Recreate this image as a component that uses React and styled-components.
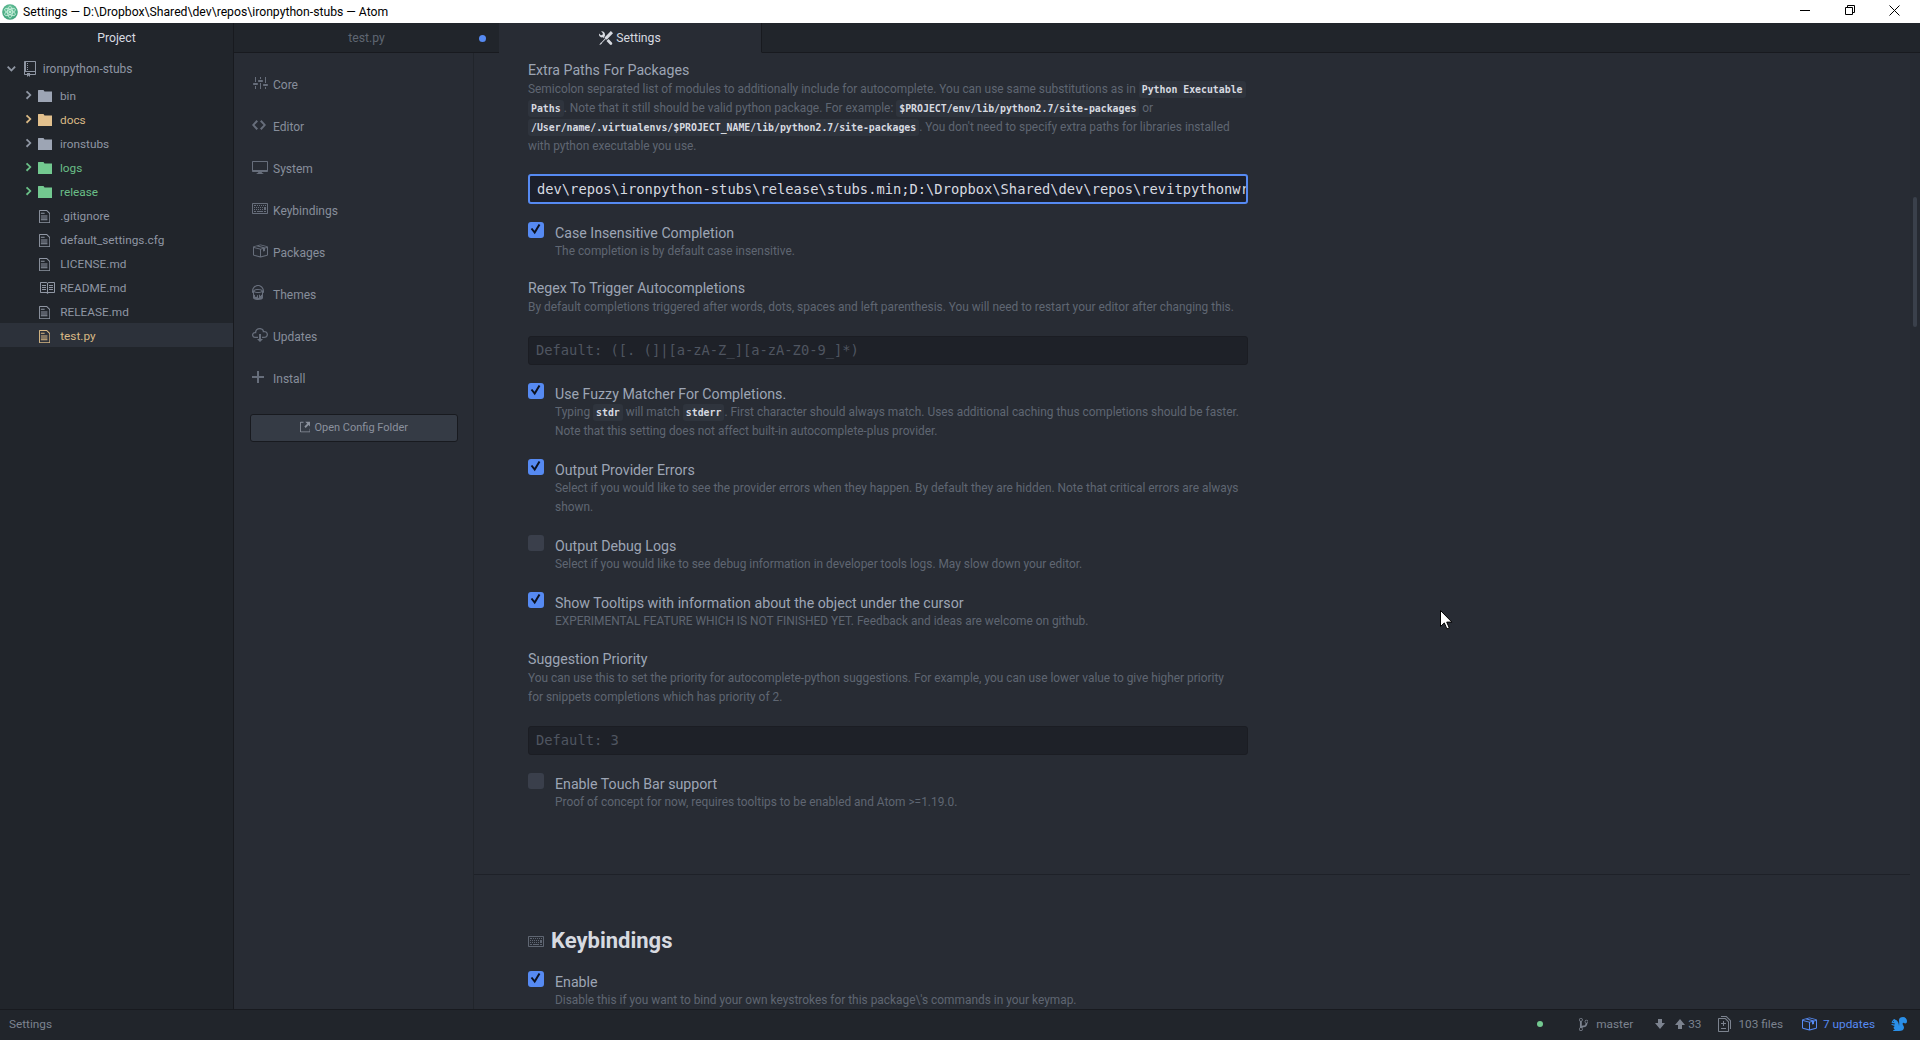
import React from 'react';
import styled, { createGlobalStyle } from 'styled-components';

const UI_FONT = `Roboto, 'Noto Sans', sans-serif`;
const MONO_FONT = `'DejaVu Sans Mono', 'Liberation Mono', monospace`;

const GlobalStyle = createGlobalStyle`
  html, body {
    margin: 0;
    height: 100%;
    overflow: hidden;
    background: #21252b;
  }
  #root {
    height: 100%;
  }
  * {
    box-sizing: border-box;
  }
`;

// octicon shapes, keyed by name: [viewBox width, path]
const ICONS = {
  repo: [12, 'M4 9H3V8h1v1zm0-3H3v1h1V6zm0-2H3v1h1V4zm0-2H3v1h1V2zm8-1v12c0 .55-.45 1-1 1H6v2l-1.5-1.5L3 16v-2H1c-.55 0-1-.45-1-1V1c0-.55.45-1 1-1h10c.55 0 1 .45 1 1zm-1 10H1v2h2v-1h3v1h5v-2zm0-10H2v9h9V1z'],
  file: [12, 'M6 5H2V4h4v1zM2 8h7V7H2v1zm0 2h7V9H2v1zm0 2h7v-1H2v1zm10-7.5V14c0 .55-.45 1-1 1H1c-.55 0-1-.45-1-1V2c0-.55.45-1 1-1h7.5L12 4.5zM11 5L8 2H1v12h10V5z'],
  book: [16, 'M3 5h4v1H3V5zm0 3h4V7H3v1zm0 2h4V9H3v1zm11-5h-4v1h4V5zm0 2h-4v1h4V7zm0 2h-4v1h4V9zm2-6v9c0 .55-.45 1-1 1H9.5l-1 1-1-1H2c-.55 0-1-.45-1-1V3c0-.55.45-1 1-1h5.5l1 1 1-1H15c.55 0 1 .45 1 1zm-8 .5L7.5 3H2v9h6V3.5zm7-.5H9.5l-.5.5V12h6V3z'],
  folder: [14, 'M0 2.5c0-.3.2-.5.5-.5h5L6.5 3.5H14V14H0z'],
  chevronRight: [8, 'M7.5 8l-5 5L1 11.5 4.75 8 1 4.5 2.5 3l5 5z'],
  chevronDown: [10, 'M5 11L0 6l1.5-1.5L5 8.25 8.5 4.5 10 6l-5 5z'],
  settings: [16, 'M4 7H3V2h1v5zm-1 7h1v-3H3v3zm5 0h1V8H8v6zm5 0h1v-2h-1v2zm1-12h-1v6h1V2zM9 2H8v2h1V2zM5 8H2c-.55 0-1 .45-1 1s.45 1 1 1h3c.55 0 1-.45 1-1s-.45-1-1-1zm5-3H7c-.55 0-1 .45-1 1s.45 1 1 1h3c.55 0 1-.45 1-1s-.45-1-1-1zm5 4h-3c-.55 0-1 .45-1 1s.45 1 1 1h3c.55 0 1-.45 1-1s-.45-1-1-1z'],
  code: [14, 'M9.5 3L8 4.5 11.5 8 8 11.5 9.5 13 14 8 9.5 3zm-5 0L0 8l4.5 5L6 11.5 2.5 8 6 4.5 4.5 3z'],
  desktop: [16, 'M15 2H1c-.55 0-1 .45-1 1v9c0 .55.45 1 1 1h5.34c-.25.61-.86 1.39-2.34 2h8c-1.48-.61-2.09-1.39-2.34-2H15c.55 0 1-.45 1-1V3c0-.55-.45-1-1-1zm0 9H1V3h14v8z'],
  keyboard: [16, 'M10 5H9V4h1v1zM3 6H2v1h1V6zm5-2H7v1h1V4zM4 4H2v1h2V4zm8 7h2v-1h-2v1zM8 7h1V6H8v1zm-4 3H2v1h2v-1zm8-6h-1v1h1V4zm2 0h-1v1h1V4zm-2 5h2V6h-2v3zm4-6v9c0 .55-.45 1-1 1H1c-.55 0-1-.45-1-1V3c0-.55.45-1 1-1h14c.55 0 1 .45 1 1zm-1 0H1v9h14V3zM6 7h1V6H6v1zm0-3H5v1h1V4zM4 7h1V6H4v1zm1 4h6v-1H5v1zm5-4h1V6h-1v1zM3 8H2v1h1V8zm5 0v1h1V8H8zM6 8v1h1V8H6zM5 8H4v1h1V8zm5 1h1V8h-1v1z'],
  package: [16, 'M1 4.27v7.47c0 .45.3.84.75.97l6.5 1.73c.16.05.34.05.5 0l6.5-1.73c.45-.13.75-.52.75-.97V4.27c0-.45-.3-.84-.75-.97l-6.5-1.74a1.4 1.4 0 0 0-.5 0L1.75 3.3c-.45.13-.75.52-.75.97zm7 9.09l-6-1.59V5l6 1.61v6.75zM2 4l2.5-.67L11 5.06l-2.5.67L2 4zm13 7.77l-6 1.59V6.61l2-.55V8.5l2-.53V5.53L15 5v6.77zm-2-7.24L6.5 2.8l2-.53L15 4l-2 .53z'],
  paintcan: [12, 'M6 0C2.69 0 0 2.69 0 6v1c0 .55.45 1 1 1v5c0 1.1 2.24 2 5 2s5-.9 5-2V8c.55 0 1-.45 1-1V6c0-3.31-2.69-6-6-6zm3 10v.5c0 .28-.22.5-.5.5s-.5-.22-.5-.5V10c0-.28-.22-.5-.5-.5s-.5.22-.5.5v2.5c0 .28-.22.5-.5.5s-.5-.22-.5-.5v-2c0-.28-.22-.5-.5-.5s-.5.22-.5.5v.5c0 .55-.45 1-1 1s-1-.45-1-1v-1c-.55 0-1-.45-1-1V7.2c.91.49 2.36.8 4 .8 1.64 0 3.09-.31 4-.8V9c0 .55-.45 1-1 1zM6 7c-1.68 0-3.12-.41-3.71-1C2.88 5.41 4.32 5 6 5c1.68 0 3.12.41 3.71 1-.59.59-2.03 1-3.71 1zm0-3c-2.76 0-4.69.83-4.97 2.09C1.29 3.34 3.41 1.02 6 1c2.59.02 4.71 2.34 4.97 5.09C10.69 4.83 8.76 4 6 4z'],
  cloud: [16, 'M9 12h2l-3 3-3-3h2V7h2v5zm3-8c0-.44-.91-3-4.5-3C5.08 1 3 2.92 3 5 1.02 5 0 6.52 0 8c0 1.53 1 3 3 3h3V9.7H3C1.38 9.7 1.3 8.28 1.3 8c0-.17.05-1.7 1.7-1.7h1.3V5c0-1.39 1.56-2.7 3.2-2.7 2.55 0 3.13 1.55 3.2 1.8v1.2H12c.81 0 2.7.22 2.7 2.2 0 2.09-2.25 2.2-2.7 2.2h-2V11h2c2.08 0 4-1.16 4-3.5C16 5.06 14.08 4 12 4z'],
  plus: [12, 'M12 9H7v5H5V9H0V7h5V2h2v5h5v2z'],
  linkExternal: [12, 'M11 10h1v3c0 .55-.45 1-1 1H1c-.55 0-1-.45-1-1V3c0-.55.45-1 1-1h3v1H1v10h10v-3zM6 2l2.25 2.25L5 7.5 6.5 9l3.25-3.25L12 8V2H6z'],
  branch: [10, 'M10 5c0-1.11-.89-2-2-2a1.993 1.993 0 0 0-1 3.72v.3c-.02.52-.23.98-.63 1.38-.4.4-.86.61-1.38.63-.83.02-1.48.16-2 .45V4.72a1.993 1.993 0 0 0-1-3.72C.88 1 0 1.89 0 3a2 2 0 0 0 1 1.72v6.56c-.59.35-1 .99-1 1.72 0 1.11.89 2 2 2 1.11 0 2-.89 2-2 0-.53-.2-1-.53-1.36.09-.06.48-.41.59-.47.25-.11.56-.17.94-.17 1.05-.05 1.95-.45 2.75-1.25S8.95 7.77 9 6.73h-.02C9.59 6.37 10 5.73 10 5zM2 1.8c.66 0 1.2.55 1.2 1.2 0 .65-.55 1.2-1.2 1.2C1.35 4.2.8 3.65.8 3c0-.65.55-1.2 1.2-1.2zm0 12.41c-.66 0-1.2-.55-1.2-1.2 0-.65.55-1.2 1.2-1.2.65 0 1.2.55 1.2 1.2 0 .65-.55 1.2-1.2 1.2zm6-8c-.66 0-1.2-.55-1.2-1.2 0-.65.55-1.2 1.2-1.2.65 0 1.2.55 1.2 1.2 0 .65-.55 1.2-1.2 1.2z'],
  arrowDown: [10, 'M7 7V3H3v4H0l5 6 5-6H7z'],
  arrowUp: [10, 'M5 3L0 9h3v4h4V9h3L5 3z'],
  diff: [13, 'M6 7h2v1H6v2H5V8H3V7h2V5h1v2zm-3 6h5v-1H3v1zM7.5 2L11 5.5V15c0 .55-.45 1-1 1H1c-.55 0-1-.45-1-1V3c0-.55.45-1 1-1h6.5zM10 6L7 3H1v12h9V6zM8.5 0H3v1h5l4 4v8h1V4.5L8.5 0z'],
  tools: [16, 'M4.48 7.27c.26.26 1.28 1.33 1.28 1.33l.56-.58-.88-.91 1.69-1.8s-.76-.74-.43-.45c.32-1.19.03-2.51-.87-3.44C4.93.5 3.66.2 2.52.51l1.93 2-.51 1.96-1.89.52-1.93-2C-.19 4.17.1 5.48 1 6.4c.94.98 2.29 1.26 3.48.87zm6.44 1.94l-2.33 2.3 3.84 3.98c.31.33.73.49 1.14.49.41 0 .82-.16 1.14-.49.63-.65.63-1.7 0-2.35l-3.79-3.93zM16 2.53L13.55 0 6.33 7.46l.88.91-4.31 4.46-.99.53-1.39 2.27.35.37 2.2-1.44.51-1.02L7.9 9.08l.88.91L16 2.53z'],
  squirrel: [16, 'M12 1C9.79 1 8 2.31 8 3.92c0 1.94.5 3.03 0 6.08 0-4.5-2.77-6.34-4-6.34.05-.5-.48-.66-.48-.66s-.22.11-.3.34c-.27-.31-.56-.27-.56-.27l-.13.58S.7 4.29.68 6.87c.2.33 1.53.6 2.47.43.89.05.67.79.47.99C2.78 9.13 2 8 1 8S0 9 1 9s1 1 3 1c-3.09 1.2 0 4 0 4H3c-1 0-1 1-1 1h6c3 0 5-1 5-3.47 0-.85-.43-1.79-1-2.53-1.11-1.46.23-2.68 1-2 .77.68 3 1 3-2 0-2.21-1.79-4-4-4zM2.5 6c-.28 0-.5-.22-.5-.5s.22-.5.5-.5.5.22.5.5-.22.5-.5.5z'],
};

const IconSvg = styled.svg`
  display: block;
  flex: none;
  fill: currentColor;
`;

const Icon = ({ name, height = 16, className }) => {
  const [w, d] = ICONS[name];
  return (
    <IconSvg className={className} viewBox={`0 0 ${w} 16`} width={(w * height) / 16} height={height}>
      <path d={d} />
    </IconSvg>
  );
};

const App = styled.div`
  height: 100vh;
  display: flex;
  flex-direction: column;
  overflow: hidden;
  font-family: ${UI_FONT};
  color: #9da5b4;
`;

/* title bar */
const TitleBar = styled.header`
  height: 23px;
  flex: none;
  display: flex;
  align-items: center;
  padding: 0 3px 0 2px;
  background: #fff;
  color: #000;
  font-size: 12.2px;
`;
const TitleText = styled.span`
  margin-left: 5px;
  flex: 1;
`;
const WinButton = styled.div`
  width: 45px;
  height: 20px;
  align-self: flex-start;
  display: flex;
  align-items: center;
  justify-content: center;
  svg {
    display: block;
    fill: none;
    stroke: #000;
    stroke-width: 1;
  }
`;

const AtomLogo = () => (
  <svg width="16" height="16" viewBox="0 0 16 16" style={{ flex: 'none' }}>
    <defs>
      <radialGradient id="atomBg" cx="50%" cy="40%" r="60%">
        <stop offset="0%" stopColor="#7fd6ad" />
        <stop offset="100%" stopColor="#3c9f78" />
      </radialGradient>
    </defs>
    <circle cx="8" cy="8" r="7.8" fill="url(#atomBg)" />
    <g fill="none" stroke="#d8f3e5" strokeWidth="0.7">
      <ellipse cx="8" cy="8" rx="6" ry="2.4" transform="rotate(30 8 8)" />
      <ellipse cx="8" cy="8" rx="6" ry="2.4" transform="rotate(-30 8 8)" />
      <ellipse cx="8" cy="8" rx="6" ry="2.4" transform="rotate(90 8 8)" />
    </g>
    <circle cx="8" cy="8" r="1.1" fill="#d8f3e5" />
  </svg>
);

/* workspace */
const Workspace = styled.div`
  flex: 1;
  min-height: 0;
  display: flex;
`;

/* tree view */
const TreePanel = styled.aside`
  width: 234px;
  flex: none;
  background: #21252b;
  border-right: 1px solid #181a1f;
`;
const ProjectTab = styled.div`
  height: 29px;
  padding-top: 1px;
  display: flex;
  align-items: center;
  justify-content: center;
  color: #d7dae0;
  font-size: 12.2px;
`;
const Tree = styled.div`
  padding-top: 5px;
  font-size: 11.8px;
`;
const TreeRoot = styled.div`
  height: 24px;
  margin-bottom: 2px;
  display: flex;
  align-items: center;
  padding-left: 7px;
  color: #8f96a3;
  gap: 7px;
  font-size: 12px;
  > :first-child {
    margin-right: 1px;
  }
`;
const TreeRow = styled.div`
  height: 24px;
  display: flex;
  align-items: center;
  padding-top: 2px;
  padding-left: ${p => (p.$folder ? 25 : 39)}px;
  color: ${p => p.$color || '#8f96a3'};
  background: ${p => (p.$selected ? '#2c313a' : 'transparent')};
`;
const Chevron = styled(Icon)`
  margin-right: 6px;
  margin-top: -2px;
`;
const TreeIcon = styled(Icon)`
  margin-right: ${p => p.$gap}px;
`;
const FolderIcon = styled(Icon)`
  margin-right: 8px;
  color: ${p => p.$color};
`;

/* editor side */
const Main = styled.div`
  flex: 1;
  min-width: 0;
  display: flex;
  flex-direction: column;
`;
const TabBar = styled.div`
  height: 30px;
  flex: none;
  display: flex;
  background: #21252b;
`;
const Tab = styled.div`
  position: relative;
  width: ${p => p.$width}px;
  padding-top: 1px;
  display: flex;
  align-items: center;
  justify-content: center;
  gap: 3px;
  font-size: 12.2px;
  color: ${p => (p.$active ? '#d7dae0' : '#5f6672')};
  background: ${p => (p.$active ? '#282c34' : '#21252b')};
  border-bottom: 1px solid ${p => (p.$active ? '#282c34' : '#181a1f')};
  border-right: ${p => (p.$active ? '1px solid #181a1f' : '0')};
`;
const ModifiedDot = styled.span`
  position: absolute;
  top: 12px;
  right: 13px;
  width: 7px;
  height: 7px;
  border-radius: 50%;
  background: #568af2;
`;
const TabFill = styled.div`
  flex: 1;
  border-bottom: 1px solid #181a1f;
`;
const SettingsPane = styled.div`
  flex: 1;
  min-height: 0;
  display: flex;
  background: #282c34;
`;

/* settings menu */
const Menu = styled.nav`
  width: 240px;
  flex: none;
  border-right: 1px solid #21252b;
  padding: 11px 16px 0;
`;
const MenuItem = styled.div`
  height: 42px;
  display: flex;
  align-items: center;
  font-size: 12px;
  color: #878e9b;
`;
const MenuIconBox = styled.div`
  width: 23px;
  flex: none;
  padding-left: 2px;
  margin-top: -4px;
  color: #676e7b;
`;
const ConfigButton = styled.button`
  width: 208px;
  height: 28px;
  margin-top: 14px;
  display: flex;
  align-items: center;
  justify-content: center;
  gap: 4px;
  padding: 0 0 2px;
  font: inherit;
  font-size: 11px;
  color: #8b919d;
  background: #353b45;
  border: 1px solid #181a1f;
  border-radius: 3px;
`;

/* settings list */
const Content = styled.div`
  flex: 1;
  min-width: 0;
  overflow: hidden;
  padding: 8px 0 0 54px;
`;
const Column = styled.div`
  width: 720px;
`;
const Title = styled.div`
  font-size: 14.2px;
  line-height: 19px;
  color: #9da5b4;
`;
const Description = styled.div`
  font-size: 11.9px;
  line-height: 19px;
  color: #5f6672;
`;
const Chip = styled.code`
  font-family: ${MONO_FONT};
  font-weight: 700;
  font-size: 9.85px;
  line-height: 17px;
  display: inline-block;
  padding: 0 3px;
  color: #d7dae0;
  background: #2f343d;
  border-radius: 3px;
`;
const Setting = styled.div`
  margin-top: ${p => p.$top || 18}px;
`;
const TextInput = styled.div`
  height: ${p => (p.$focused ? 30 : 29)}px;
  margin-top: ${p => (p.$focused ? 18 : 19)}px;
  padding: ${p => (p.$focused ? '0 7px' : '0 7px 2px')};
  display: flex;
  align-items: center;
  overflow: hidden;
  white-space: nowrap;
  font-family: ${MONO_FONT};
  font-size: 13.75px;
  border-radius: 3px;
  color: ${p => (p.$focused ? '#d7dae0' : '#4f5560')};
  background: ${p => (p.$focused ? '#1b1f2b' : '#1e2128')};
  border: ${p => (p.$focused ? '2px solid #568af2' : '1px solid #1b1d23')};
`;
const CheckRow = styled.div`
  display: flex;
  gap: 11px;
  margin-top: 18px;
`;
const CheckBox = styled.div`
  width: 16px;
  height: 16px;
  flex: none;
  border-radius: 3px;
  background: ${p => (p.$checked ? '#568af2' : '#3a3f4b')};
  svg {
    display: block;
    fill: none;
    stroke: #0c1220;
    stroke-width: 2;
  }
`;
const CheckBody = styled.div`
  padding-top: 2px;
  flex: 1;
  min-width: 0;
  ${Title} {
    line-height: 18px;
  }
`;
const Rule = styled.hr`
  margin: 62px 0 0 -54px;
  width: calc(100vw - 474px);
  height: 0;
  border: 0;
  border-top: 1px solid #1e2128;
`;
const SectionHeading = styled.h2`
  display: flex;
  align-items: center;
  gap: 7px;
  margin: 54px 0 0;
  font-size: 22px;
  line-height: 24px;
  font-weight: 700;
  color: #d7dae0;
  svg {
    color: #5f6672;
    margin-top: 2px;
  }
`;
const Scrollbar = styled.div`
  width: 10px;
  flex: none;
  padding-top: 144px;
  padding-left: 3px;
  background: #262a32;
`;
const ScrollThumb = styled.div`
  width: 4px;
  height: 130px;
  border-radius: 2px;
  background: #3a404b;
`;

/* status bar */
const StatusBar = styled.footer`
  height: 31px;
  flex: none;
  display: flex;
  align-items: center;
  padding: 0 13px 2px 9px;
  background: #21252b;
  border-top: 1px solid #181a1f;
  font-size: 11.8px;
  color: #7c838f;
`;
const StatusLeft = styled.div`
  flex: 1;
`;
const StatusItem = styled.div`
  display: flex;
  align-items: center;
  gap: ${p => p.$gap || 0}px;
  margin-left: ${p => p.$left || 0}px;
  color: ${p => p.$color || 'inherit'};
`;
const GreenDot = styled.span`
  width: 6px;
  height: 6px;
  border-radius: 50%;
  background: #73c990;
`;
const Cursor = styled.svg`
  position: absolute;
  left: 1440px;
  top: 610px;
  pointer-events: none;
`;

const treeFolders = [
  { name: 'bin', icon: '#9da5b4', text: '#8f96a3' },
  { name: 'docs', icon: '#e2c08d', text: '#d9b985' },
  { name: 'ironstubs', icon: '#9da5b4', text: '#8f96a3' },
  { name: 'logs', icon: '#73c990', text: '#6abf87' },
  { name: 'release', icon: '#73c990', text: '#6abf87' },
];
const treeFiles = [
  { name: '.gitignore', icon: 'file' },
  { name: 'default_settings.cfg', icon: 'file' },
  { name: 'LICENSE.md', icon: 'file' },
  { name: 'README.md', icon: 'book' },
  { name: 'RELEASE.md', icon: 'file' },
  { name: 'test.py', icon: 'file', color: '#d9b985', selected: true },
];
const menuItems = [
  { name: 'Core', icon: 'settings' },
  { name: 'Editor', icon: 'code' },
  { name: 'System', icon: 'desktop' },
  { name: 'Keybindings', icon: 'keyboard' },
  { name: 'Packages', icon: 'package' },
  { name: 'Themes', icon: 'paintcan' },
  { name: 'Updates', icon: 'cloud' },
  { name: 'Install', icon: 'plus' },
];

const Check = ({ checked, title, children }) => (
  <CheckRow>
    <CheckBox $checked={checked}>
      {checked && (
        <svg width="16" height="16" viewBox="0 0 16 16">
          <path d="M3.5 6.5 L6.7 10.5 L11.5 2.5" />
        </svg>
      )}
    </CheckBox>
    <CheckBody>
      <Title>{title}</Title>
      <Description>{children}</Description>
    </CheckBody>
  </CheckRow>
);

export default function AtomSettings() {
  return (
    <App>
      <GlobalStyle />
      <TitleBar>
        <AtomLogo />
        <TitleText>Settings — D:\Dropbox\Shared\dev\repos\ironpython-stubs — Atom</TitleText>
        <WinButton>
          <svg width="10" height="10" viewBox="0 0 10 10"><path d="M0 5.5H10" /></svg>
        </WinButton>
        <WinButton>
          <svg width="10" height="10" viewBox="0 0 10 10"><path d="M.5 2.5h7v7h-7zM2.5 2.5v-2h7v7h-2" /></svg>
        </WinButton>
        <WinButton>
          <svg width="11" height="11" viewBox="0 0 11 11"><path d="M.5.5l10 10M10.5.5l-10 10" /></svg>
        </WinButton>
      </TitleBar>

      <Workspace>
        <TreePanel>
          <ProjectTab>Project</ProjectTab>
          <Tree>
            <TreeRoot>
              <Icon name="chevronDown" height={14} />
              <Icon name="repo" height={16} />
              <span>ironpython-stubs</span>
            </TreeRoot>
            {treeFolders.map(f => (
              <TreeRow key={f.name} $folder $color={f.text}>
                <Chevron name="chevronRight" height={14} />
                <FolderIcon name="folder" height={16} $color={f.icon} />
                <span>{f.name}</span>
              </TreeRow>
            ))}
            {treeFiles.map(f => (
              <TreeRow key={f.name} $color={f.color} $selected={f.selected}>
                <TreeIcon name={f.icon} height={f.icon === 'book' ? 16 : 15} $gap={f.icon === 'book' ? 5 : 10} />
                <span>{f.name}</span>
              </TreeRow>
            ))}
          </Tree>
        </TreePanel>

        <Main>
          <TabBar>
            <Tab $width={265}>
              test.py
              <ModifiedDot />
            </Tab>
            <Tab $width={263} $active>
              <Icon name="tools" height={14} />
              Settings
            </Tab>
            <TabFill />
          </TabBar>

          <SettingsPane>
            <Menu>
              {menuItems.map(item => (
                <MenuItem key={item.name}>
                  <MenuIconBox>
                    <Icon name={item.icon} height={16} />
                  </MenuIconBox>
                  {item.name}
                </MenuItem>
              ))}
              <ConfigButton>
                <Icon name="linkExternal" height={14} />
                Open Config Folder
              </ConfigButton>
            </Menu>

            <Content>
              <Column>
                <Title>Extra Paths For Packages</Title>
                <Description>
                  Semicolon separated list of modules to additionally include for autocomplete. You can use same substitutions as in <Chip>Python Executable</Chip> <Chip>Paths</Chip>. Note that it still should be valid python package. For example: <Chip>$PROJECT/env/lib/python2.7/site-packages</Chip> or <Chip>/User/name/.virtualenvs/$PROJECT_NAME/lib/python2.7/site-packages</Chip>. You don't need to specify extra paths for libraries installed with python executable you use.
                </Description>
                <TextInput $focused>dev\repos\ironpython-stubs\release\stubs.min;D:\Dropbox\Shared\dev\repos\revitpythonwr</TextInput>

                <Check checked title="Case Insensitive Completion">The completion is by default case insensitive.</Check>

                <Setting>
                  <Title>Regex To Trigger Autocompletions</Title>
                  <Description>By default completions triggered after words, dots, spaces and left parenthesis. You will need to restart your editor after changing this.</Description>
                </Setting>
                <TextInput>Default: ([. (]|[a-zA-Z_][a-zA-Z0-9_]*)</TextInput>

                <Check checked title="Use Fuzzy Matcher For Completions.">
                  Typing <Chip>stdr</Chip> will match <Chip>stderr</Chip>. First character should always match. Uses additional caching thus completions should be faster. Note that this setting does not affect built-in autocomplete-plus provider.
                </Check>
                <Check checked title="Output Provider Errors">
                  Select if you would like to see the provider errors when they happen. By default they are hidden. Note that critical errors are always shown.
                </Check>
                <Check title="Output Debug Logs">
                  Select if you would like to see debug information in developer tools logs. May slow down your editor.
                </Check>
                <Check checked title="Show Tooltips with information about the object under the cursor">
                  EXPERIMENTAL FEATURE WHICH IS NOT FINISHED YET. Feedback and ideas are welcome on github.
                </Check>

                <Setting $top={19}>
                  <Title>Suggestion Priority</Title>
                  <Description>You can use this to set the priority for autocomplete-python suggestions. For example, you can use lower value to give higher priority<br />for snippets completions which has priority of 2.</Description>
                </Setting>
                <TextInput>Default: 3</TextInput>

                <Check title="Enable Touch Bar support">Proof of concept for now, requires tooltips to be enabled and Atom &gt;=1.19.0.</Check>

                <Rule />
                <SectionHeading>
                  <Icon name="keyboard" height={16} />
                  Keybindings
                </SectionHeading>
                <Check checked title="Enable">Disable this if you want to bind your own keystrokes for this package\'s commands in your keymap.</Check>
              </Column>
            </Content>
            <Scrollbar>
              <ScrollThumb />
            </Scrollbar>
          </SettingsPane>
        </Main>
      </Workspace>

      <StatusBar>
        <StatusLeft>Settings</StatusLeft>
        <GreenDot />
        <StatusItem $left={36} $gap={8}>
          <Icon name="branch" height={15} />
          master
        </StatusItem>
        <StatusItem $left={22}>
          <Icon name="arrowDown" height={16} />
        </StatusItem>
        <StatusItem $left={10} $gap={3}>
          <Icon name="arrowUp" height={16} />
          33
        </StatusItem>
        <StatusItem $left={17} $gap={7}>
          <Icon name="diff" height={16} />
          103 files
        </StatusItem>
        <StatusItem $left={18} $gap={6} $color="#568af2">
          <Icon name="package" height={16} />
          7 updates
        </StatusItem>
        <StatusItem $left={16} $color="#2a8fe8">
          <Icon name="squirrel" height={16} />
        </StatusItem>
      </StatusBar>

      <Cursor width="13" height="20" viewBox="0 0 13 20">
        <path d="M.5.5v16l3.8-3.6 2.6 6 2.4-1-2.6-5.8h5.2z" fill="#fff" stroke="#000" strokeWidth="1" />
      </Cursor>
    </App>
  );
}
